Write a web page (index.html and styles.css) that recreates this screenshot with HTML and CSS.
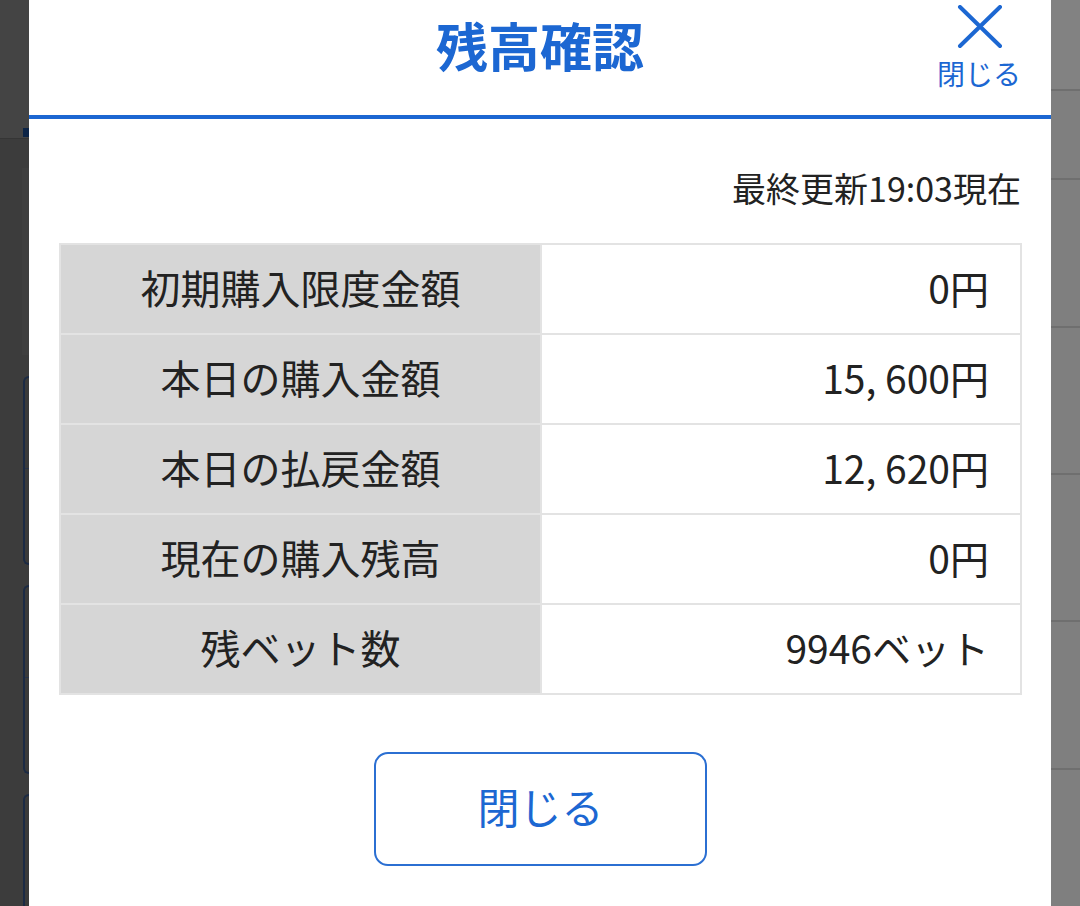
FILE: index.html
```html
<!DOCTYPE html>
<html lang="ja">
<head>
<meta charset="utf-8">
<title>残高確認</title>
<link rel="stylesheet" href="styles.css">
</head>
<body>
<div class="page">
  <div class="bg-left">
    <div class="bg-left-top"><span class="bg-left-tab"></span></div>
    <div class="bg-left-card"></div>
    <div class="bg-left-box"><div class="bg-left-box-line"></div></div>
    <div class="bg-left-box"><div class="bg-left-box-line"></div></div>
    <div class="bg-left-box bg-left-box-last"></div>
  </div>

  <div class="modal">
    <header class="modal-header">
      <div class="header-spacer"></div>
      <h1 class="modal-title">残高確認</h1>
      <div class="header-close">
        <button class="close-btn" type="button">
          <svg class="close-icon" width="46" height="44" viewBox="0 0 46 44" aria-hidden="true">
            <path d="M3 2 L43 41 M43 2 L3 41" stroke="#1c67d2" stroke-width="4" stroke-linecap="round" fill="none"/>
          </svg>
          <span class="close-label">閉じる</span>
        </button>
      </div>
    </header>

    <div class="modal-body">
      <p class="updated">最終更新19:03現在</p>
      <div class="balance">
        <div class="cell label">初期購入限度金額</div>
        <div class="cell value">0円</div>
        <div class="cell label">本日の購入金額</div>
        <div class="cell value">15, 600円</div>
        <div class="cell label">本日の払戻金額</div>
        <div class="cell value">12, 620円</div>
        <div class="cell label">現在の購入残高</div>
        <div class="cell value">0円</div>
        <div class="cell label">残ベット数</div>
        <div class="cell value">9946ベット</div>
      </div>
      <div class="actions">
        <button class="close-main" type="button">閉じる</button>
      </div>
    </div>
  </div>

  <div class="bg-right">
    <div class="bg-right-row bg-right-top"></div>
    <div class="bg-right-row r89"></div>
    <div class="bg-right-row r148"></div>
    <div class="bg-right-row r147"></div>
    <div class="bg-right-row r147"></div>
    <div class="bg-right-row r148"></div>
    <div class="bg-right-row"></div>
  </div>
</div>
</body>
</html>
```

FILE: styles.css
```css
* { box-sizing: border-box; }

html, body {
  margin: 0;
  padding: 0;
  height: 906px;
  overflow: hidden;
}

body {
  font-family: "Noto Sans CJK JP", "Noto Sans", sans-serif;
  color: #222222;
  background: #3c3c3c;
}

.page {
  display: flex;
  width: 1080px;
  height: 906px;
}

/* ---------- dimmed background, left ---------- */
.bg-left {
  width: 29px;
  flex: none;
  display: flex;
  flex-direction: column;
  background: #3c3c3c;
}
.bg-left-top {
  height: 139px;
  background: #444444;
  border-bottom: 1px solid #353535;
  display: flex;
  justify-content: flex-end;
  align-items: flex-end;
  padding-bottom: 1px;
}
.bg-left-tab {
  width: 6px;
  height: 9px;
  background: #0d2446;
}
.bg-left-card {
  height: 187px;
  margin: 29px 0 0 22px;
  background: #3f3f3f;
}
.bg-left-box {
  height: 189px;
  margin: 21px 0 0 23px;
  border: 2px solid #1b2a44;
  border-right: none;
  border-radius: 8px 0 0 8px;
  background: #3a3a3a;
  padding-top: 90px;
}
.bg-left-box + .bg-left-box { margin-top: 20px; }
.bg-left-box-line {
  height: 1px;
  background: #283349;
}
.bg-left-box-last {
  flex: 1;
  border-bottom: none;
  border-radius: 8px 0 0 0;
}

/* ---------- dimmed background, right ---------- */
.bg-right {
  width: 29px;
  flex: none;
  background: #7f7f7f;
  display: flex;
  flex-direction: column;
}
.bg-right-row {
  border-bottom: 2px solid #6f6f6f;
}
.bg-right-top { height: 91px; background: #828282; }
.r89 { height: 89px; }
.r148 { height: 148px; }
.r147 { height: 147px; }
.bg-right-row:last-child { flex: 1; border-bottom: none; }

/* ---------- modal ---------- */
.modal {
  width: 1022px;
  flex: none;
  background: #ffffff;
  display: flex;
  flex-direction: column;
}

.modal-header {
  height: 119px;
  border-bottom: 4px solid #1c67d2;
  display: grid;
  grid-template-columns: 1fr auto 1fr;
  align-items: start;
}

.modal-title {
  margin: 9px 0 0;
  font-size: 52px;
  line-height: 72px;
  font-weight: 700;
  color: #1c67d2;
  letter-spacing: 0;
}

.header-close {
  display: flex;
  justify-content: flex-end;
  padding-right: 30px;
}

.close-btn {
  margin: 0;
  padding: 5px 0 0;
  border: none;
  background: none;
  display: flex;
  flex-direction: column;
  align-items: center;
  font-family: inherit;
  cursor: pointer;
}
.close-icon { display: block; margin-left: 3px; }
.close-label {
  margin-top: 9px;
  font-size: 28px;
  line-height: 30px;
  color: #1c67d2;
}

.modal-body {
  padding: 0 29px 0 30px;
  display: flex;
  flex-direction: column;
}

.updated {
  margin: 48px 0 0;
  text-align: right;
  font-size: 34px;
  line-height: 42px;
  color: #222222;
  padding-right: 1px;
}

.balance {
  margin-top: 34px;
  display: grid;
  grid-template-columns: 481px 1fr;
  border-top: 2px solid #e3e3e3;
  border-left: 2px solid #e3e3e3;
}

.cell {
  height: 90px;
  border-right: 2px solid #e3e3e3;
  border-bottom: 2px solid #e3e3e3;
  display: flex;
  align-items: center;
  font-size: 40px;
  line-height: 1;
  color: #222222;
  padding-bottom: 4px;
}

.cell.label {
  background: #d6d6d6;
  justify-content: center;
}

.cell.value {
  justify-content: flex-end;
  padding-right: 31px;
  font-size: 39px;
}

.actions {
  display: flex;
  justify-content: center;
  margin-top: 57px;
}

.close-main {
  width: 333px;
  height: 114px;
  border: 2px solid #2b6fd2;
  border-radius: 14px;
  background: #ffffff;
  color: #1c67d2;
  font-family: inherit;
  font-size: 42px;
  line-height: 1;
  padding: 0 0 6px;
  cursor: pointer;
}
```
